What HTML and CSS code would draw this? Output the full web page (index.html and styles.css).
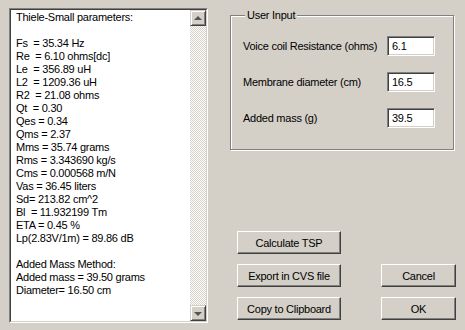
FILE: index.html
```html
<!DOCTYPE html>
<html lang="en">
<head>
    <meta charset="UTF-8">
    <title>Thiele-Small parameters</title>
    <link rel="stylesheet" href="styles.css">
</head>
<body>
    <div class="memo">
        <div class="memo-inner">
            <div class="memo-text">Thiele-Small parameters:

Fs  = 35.34 Hz
Re  = 6.10 ohms[dc]
Le  = 356.89 uH
L2  = 1209.36 uH
R2  = 21.08 ohms
Qt  = 0.30
Qes = 0.34
Qms = 2.37
Mms = 35.74 grams
Rms = 3.343690 kg/s
Cms = 0.000568 m/N
Vas = 36.45 liters
Sd= 213.82 cm^2
Bl  = 11.932199 Tm
ETA = 0.45 %
Lp(2.83V/1m) = 89.86 dB

Added Mass Method:
Added mass = 39.50 grams
Diameter= 16.50 cm</div>
            <div class="scrollbar">
                <div class="scroll-btn"><span class="arrow arrow-up"></span></div>
                <div class="scroll-track"></div>
                <div class="scroll-btn"><span class="arrow arrow-down"></span></div>
            </div>
        </div>
    </div>

    <div class="side">
        <fieldset class="group">
            <legend>User Input</legend>
            <div class="field">
                <label>Voice coil Resistance (ohms)</label>
                <div class="edit">6.1</div>
            </div>
            <div class="field">
                <label>Membrane diameter (cm)</label>
                <div class="edit">16.5</div>
            </div>
            <div class="field">
                <label>Added mass (g)</label>
                <div class="edit">39.5</div>
            </div>
        </fieldset>

        <div class="buttons">
            <button class="btn btn-calc">Calculate TSP</button>
            <button class="btn">Export in CVS file</button>
            <button class="btn">Cancel</button>
            <button class="btn">Copy to Clipboard</button>
            <button class="btn">OK</button>
        </div>
    </div>
</body>
</html>
```

FILE: styles.css
```css
body {
    margin: 0;
    padding: 8px 0 0 9px;
    width: 465px;
    height: 330px;
    box-sizing: border-box;
    overflow: hidden;
    background: #d4d0c8;
    font-family: "Liberation Sans", Arial, sans-serif;
    font-size: 11px;
    letter-spacing: -0.25px;
    color: #000;
    display: flex;
    align-items: flex-start;
}

/* Многострочное поле с результатами */
.memo {
    width: 199px;
    height: 315px;
    box-sizing: border-box;
    border: 1px solid;
    border-color: #808080 #fff #fff #808080;
}

.memo-inner {
    height: 100%;
    box-sizing: border-box;
    border: 1px solid;
    border-color: #404040 #d4d0c8 #d4d0c8 #404040;
    background: #fff;
    display: flex;
}

.memo-text {
    flex: 1;
    white-space: pre;
    line-height: 13px;
    padding: 1px 0 0 5px;
    overflow: hidden;
}

.scrollbar {
    width: 16px;
    display: flex;
    flex-direction: column;
}

.scroll-btn {
    width: 16px;
    height: 16px;
    box-sizing: border-box;
    background: #d4d0c8;
    border: 1px solid;
    border-color: #d4d0c8 #404040 #404040 #d4d0c8;
    box-shadow: inset 1px 1px #fff, inset -1px -1px #808080;
    display: flex;
    align-items: center;
    justify-content: center;
}

.scroll-track {
    flex: 1;
    background: repeating-conic-gradient(#fff 0 25%, #d4d0c8 0 50%) 0 0 / 2px 2px;
}

.arrow {
    width: 0;
    height: 0;
    border-left: 4px solid transparent;
    border-right: 4px solid transparent;
}

.arrow-up {
    border-bottom: 4px solid #555;
    margin-top: -1px;
}

.arrow-down {
    border-top: 4px solid #555;
    margin-top: 1px;
}

/* Правая колонка */
.side {
    margin-left: 22px;
    width: 226px;
}

.group {
    margin: 1px 0 0;
    width: 224px;
    box-sizing: border-box;
    padding: 14px 0 21px 12px;
    border: 1px solid #808080;
    box-shadow: inset 1px 1px #fff, 1px 1px #fff;
    display: flex;
    flex-direction: column;
    gap: 16px;
}

.group legend {
    padding: 0 2px;
    margin-left: 2px;
    line-height: 13px;
    background: #d4d0c8;
}

.field {
    display: flex;
    align-items: center;
    height: 20px;
}

.field label {
    width: 144px;
}

.edit {
    width: 48px;
    height: 20px;
    box-sizing: border-box;
    background: #fff;
    border: 1px solid;
    border-color: #808080 #fff #fff #808080;
    box-shadow: inset 1px 1px #404040, inset -1px -1px #d4d0c8;
    padding: 3px 0 0 4px;
    line-height: 13px;
}

.buttons {
    margin: 81px 0 0 7px;
    display: grid;
    grid-template-columns: 104px 75px;
    grid-auto-rows: 23px;
    column-gap: 40px;
    row-gap: 10px;
}

.btn-calc {
    grid-column: 1 / -1;
    width: 104px;
}

.btn {
    font: inherit;
    letter-spacing: inherit;
    color: #000;
    background: #d4d0c8;
    border: 1px solid;
    border-color: #fff #404040 #404040 #fff;
    box-shadow: inset -1px -1px #808080;
    padding: 0;
    margin: 0;
    border-radius: 0;
}
```
